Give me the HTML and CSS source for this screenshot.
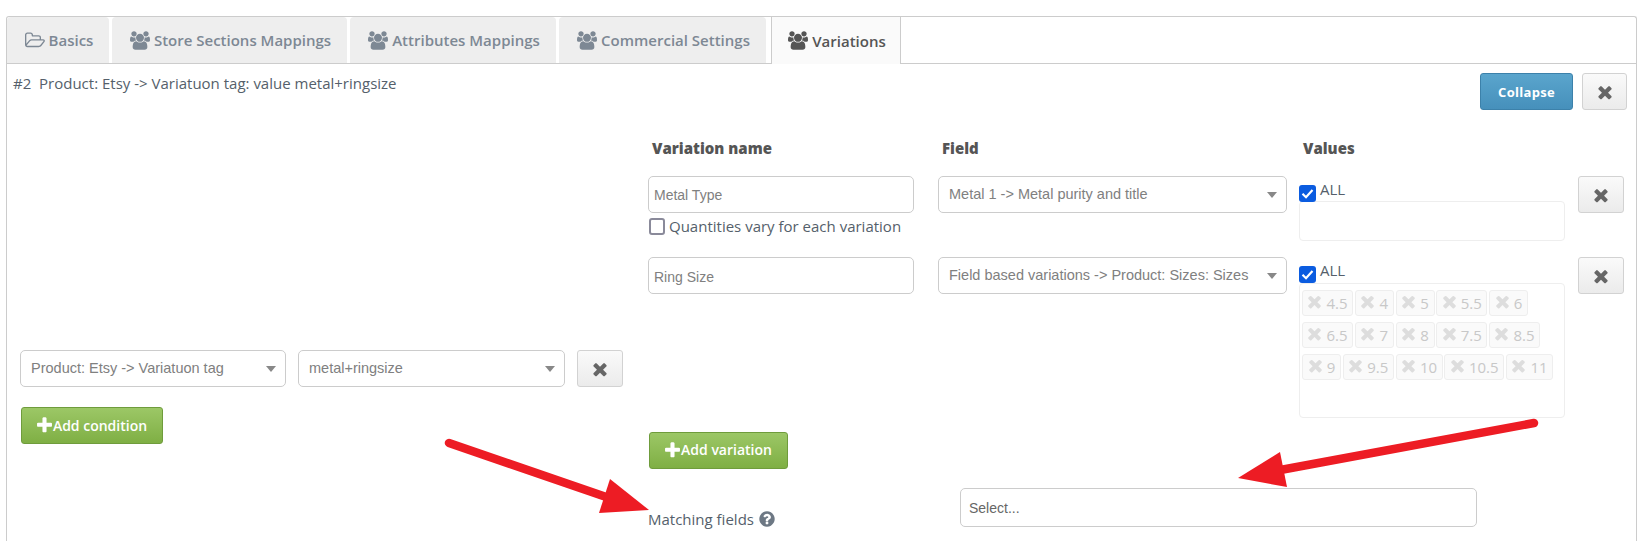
FILE: index.html
```html
<!DOCTYPE html>
<html lang="en">
<head>
<meta charset="utf-8">
<title>Variations</title>
<link rel="stylesheet" href="styles.css">
</head>
<body>
<svg class="defs" width="0" height="0" aria-hidden="true">
  <symbol id="i-users" viewBox="0 0 1920 1792"><path d="M593 896q-162 5-265 128h-134q-82 0-138-40.500t-56-118.500q0-353 124-353 6 0 43.500 21t97.500 42.500 119 21.500q67 0 133-23-5 37-5 66 0 139 81 256zm1071 637q0 120-73 189.500t-194 69.500h-874q-121 0-194-69.500t-73-189.500q0-53 3.500-103.500t14-109 26.500-108.500 43-97.500 62-81 85.500-53.500 111.500-20q10 0 43 21.500t73 48 107 48 135 21.500 135-21.500 107-48 73-48 43-21.500q61 0 111.500 20t85.500 53.500 62 81 43 97.500 26.500 108.500 14 109 3.500 103.500zm-1024-1277q0 106-75 181t-181 75-181-75-75-181 75-181 181-75 181 75 75 181zm704 384q0 159-112.500 271.500t-271.500 112.500-271.500-112.500-112.500-271.500 112.500-271.500 271.500-112.500 271.500 112.500 112.500 271.500zm576 225q0 78-56 118.500t-138 40.500h-134q-103-123-265-128 81-117 81-256 0-29-5-66 66 23 133 23 59 0 119-21.500t97.500-42.500 43.500-21q124 0 124 353zm-128-609q0 106-75 181t-181 75-181-75-75-181 75-181 181-75 181 75 75 181z"/></symbol>
  <symbol id="i-folder" viewBox="0 0 1920 1792"><path d="M1781 931q0-35-53-35h-1088q-40 0-85.500 21.500t-71.500 52.500l-294 363q-18 24-18 40 0 35 53 35h1088q40 0 86-22t71-53l294-363q18-22 18-39zm-1141-163h768v-160q0-40-28-68t-68-28h-576q-40 0-68-28t-28-68v-64q0-40-28-68t-68-28h-320q-40 0-68 28t-28 68v853l256-315q44-53 116-87.500t140-34.500zm1269 163q0 62-46 120l-295 363q-43 53-116 87.500t-140 34.500h-1088q-92 0-158-66t-66-158v-960q0-92 66-158t158-66h320q92 0 158 66t66 158v32h544q92 0 158 66t66 158v160h192q54 0 99 24.500t67 70.500q15 32 15 68z"/></symbol>
  <symbol id="i-times" viewBox="0 0 1408 1792"><path d="M1298 1322q0 40-28 68l-136 136q-28 28-68 28t-68-28l-294-294-294 294q-28 28-68 28t-68-28l-136-136q-28-28-28-68t28-68l294-294-294-294q-28-28-28-68t28-68l136-136q28-28 68-28t68 28l294 294 294-294q28-28 68-28t68 28l136 136q28 28 28 68t-28 68l-294 294 294 294q28 28 28 68z"/></symbol>
  <symbol id="i-plus" viewBox="0 0 1408 1792"><path d="M1408 736v192q0 40-28 68t-68 28h-416v416q0 40-28 68t-68 28h-192q-40 0-68-28t-28-68v-416h-416q-40 0-68-28t-28-68v-192q0-40 28-68t68-28h416v-416q0-40 28-68t68-28h192q40 0 68 28t28 68v416h416q40 0 68 28t28 68z"/></symbol>
  <symbol id="i-help" viewBox="0 0 1536 1792"><path d="M896 1376v-192q0-14-9-23t-23-9h-192q-14 0-23 9t-9 23v192q0 14 9 23t23 9h192q14 0 23-9t9-23zm256-672q0-88-55.500-163t-138.500-116-170-41q-243 0-371 213-15 24 8 42l132 100q7 6 19 6 16 0 25-12 53-68 86-92 34-24 86-24 48 0 85.500 26t37.500 59q0 38-20 61t-68 45q-63 28-115.500 86.500t-52.500 125.500v36q0 14 9 23t23 9h192q14 0 23-9t9-23q0-19 21.500-49.500t54.500-49.500q32-18 49-28.500t46-35 44.500-48 28-60.500 12.500-81zm384 192q0 209-103 385.500t-279.500 279.500-385.500 103-385.500-103-279.500-279.500-103-385.500 103-385.500 279.500-279.500 385.500-103 385.500 103 279.500 279.500 103 385.500z"/></symbol>
  <symbol id="i-check" viewBox="0 0 17 17"><path d="M3.500 8.800 7 12.200 13.500 5" fill="none" stroke="#fff" stroke-width="2.200"/></symbol>
</svg>

<div class="panel">
  <nav class="tabs">
    <a class="tab tab-basics"><svg class="tab-icon"><use href="#i-folder"/></svg>Basics</a>
    <a class="tab tab-store"><svg class="tab-icon"><use href="#i-users"/></svg>Store Sections Mappings</a>
    <a class="tab tab-attrs"><svg class="tab-icon"><use href="#i-users"/></svg>Attributes Mappings</a>
    <a class="tab tab-commercial"><svg class="tab-icon"><use href="#i-users"/></svg>Commercial Settings</a>
    <a class="tab tab-active"><svg class="tab-icon"><use href="#i-users"/></svg>Variations</a>
  </nav>

  <header class="rule-head">
    <div class="rule-title">#2&nbsp; Product: Etsy -&gt; Variatuon tag: value metal+ringsize</div>
    <div class="rule-actions">
      <button class="btn btn-blue">Collapse</button>
      <button class="btn btn-x btn-x-top"><svg class="x-icon"><use href="#i-times"/></svg></button>
    </div>
  </header>

  <div class="rule-body">
    <section class="conditions">
      <div class="condition-row">
        <div class="select select-cond">Product: Etsy -&gt; Variatuon tag<i class="caret"></i></div>
        <div class="select select-cond-wide">metal+ringsize<i class="caret"></i></div>
        <button class="btn btn-x"><svg class="x-icon"><use href="#i-times"/></svg></button>
      </div>
      <button class="btn btn-green btn-add-cond"><svg class="plus-icon"><use href="#i-plus"/></svg>Add condition</button>
    </section>

    <section class="variations">
      <div class="var-grid var-head">
        <div class="col-title">Variation name</div>
        <div class="col-title">Field</div>
        <div class="col-title">Values</div>
      </div>

      <div class="var-grid var-row var-row-first">
        <div>
          <input class="text-input" placeholder="Metal Type">
          <label class="qty"><span class="cb"></span>Quantities vary for each variation</label>
        </div>
        <div class="select select-field">Metal 1 -&gt; Metal purity and title<i class="caret"></i></div>
        <div class="values">
          <div class="all"><span class="cb cb-on"><svg class="cb-check"><use href="#i-check"/></svg></span><span class="all-text">ALL</span></div>
          <div class="value-box value-box-empty"></div>
        </div>
        <button class="btn btn-x"><svg class="x-icon"><use href="#i-times"/></svg></button>
      </div>

      <div class="var-grid var-row">
        <div><input class="text-input text-input-low" placeholder="Ring Size"></div>
        <div class="select select-field">Field based variations -&gt; Product: Sizes: Sizes<i class="caret"></i></div>
        <div class="values">
          <div class="all"><span class="cb cb-on"><svg class="cb-check"><use href="#i-check"/></svg></span><span class="all-text">ALL</span></div>
          <div class="value-box value-box-tags">
            <span class="tag tag-w"><svg class="tag-x"><use href="#i-times"/></svg>4.5</span>
            <span class="tag tag-n"><svg class="tag-x"><use href="#i-times"/></svg>4</span>
            <span class="tag tag-n"><svg class="tag-x"><use href="#i-times"/></svg>5</span>
            <span class="tag tag-w"><svg class="tag-x"><use href="#i-times"/></svg>5.5</span>
            <span class="tag tag-n"><svg class="tag-x"><use href="#i-times"/></svg>6</span>
            <span class="tag tag-w"><svg class="tag-x"><use href="#i-times"/></svg>6.5</span>
            <span class="tag tag-n"><svg class="tag-x"><use href="#i-times"/></svg>7</span>
            <span class="tag tag-n"><svg class="tag-x"><use href="#i-times"/></svg>8</span>
            <span class="tag tag-w"><svg class="tag-x"><use href="#i-times"/></svg>7.5</span>
            <span class="tag tag-w"><svg class="tag-x"><use href="#i-times"/></svg>8.5</span>
            <span class="tag tag-n"><svg class="tag-x"><use href="#i-times"/></svg>9</span>
            <span class="tag tag-w"><svg class="tag-x"><use href="#i-times"/></svg>9.5</span>
            <span class="tag tag-m"><svg class="tag-x"><use href="#i-times"/></svg>10</span>
            <span class="tag tag-l"><svg class="tag-x"><use href="#i-times"/></svg>10.5</span>
            <span class="tag tag-m"><svg class="tag-x"><use href="#i-times"/></svg>11</span>
          </div>
        </div>
        <button class="btn btn-x"><svg class="x-icon"><use href="#i-times"/></svg></button>
      </div>

      <button class="btn btn-green btn-add-var"><svg class="plus-icon"><use href="#i-plus"/></svg>Add variation</button>

      <div class="matching">
        <div class="matching-label">Matching fields <svg class="help-icon"><use href="#i-help"/></svg></div>
        <input class="text-input matching-input" placeholder="Select...">
      </div>
    </section>
  </div>
</div>

<svg class="annotations" viewBox="0 0 1643 541" aria-hidden="true">
  <path class="arrow-shaft" d="M449 443 612 499"/>
  <polygon class="arrow-head" points="610,479 649,510 599,513"/>
  <path class="arrow-shaft" d="M1534 423 1275 471"/>
  <polygon class="arrow-head" points="1280,452 1238,478 1287,487"/>
</svg>
</body>
</html>
```
FILE: styles.css
```css
* { box-sizing: border-box; }
html, body { height: 541px; }
body {
  margin: 0;
  padding: 16px 0 0 6px;
  overflow: hidden;
  background: #fff;
  color: #555f6b;
  font: 15px/20px "Open Sans", sans-serif;
}
.defs { position: absolute; }
svg { fill: currentColor; }

.panel {
  width: 1631px;
  height: 525px;
  border: 1px solid #ccc;
  border-bottom: 0;
  border-radius: 3px 3px 0 0;
}

/* tabs */
.tabs {
  display: flex;
  height: 47px;
  border-bottom: 1px solid #ccc;
}
.tab {
  display: flex;
  align-items: center;
  justify-content: center;
  height: 47px;
  margin-right: 3px;
  padding-left: 2px;
  border-bottom: 1px solid #ccc;
  border-radius: 4px 4px 0 0;
  background: #eee;
  color: #7d8894;
  font-weight: 600;
  font-size: 15px;
}
.tab-icon { width: 20px; height: 19px; margin-right: 4px; }
.tab-basics { width: 102px; }
.tab-store { width: 235px; }
.tab-attrs { width: 206px; }
.tab-commercial { width: 207px; margin-right: 5px; }
.tab-active {
  width: 130px;
  margin: 0;
  background: #fafafa;
  color: #555;
  border: solid #ccc;
  border-width: 0 1px;
  border-radius: 0;
}

/* header */
.rule-head {
  display: flex;
  justify-content: space-between;
  height: 68px;
  padding: 9px 9px 0 6px;
}
.rule-actions { display: flex; gap: 9px; align-items: flex-start; }

/* buttons */
.btn {
  display: inline-flex;
  align-items: center;
  justify-content: center;
  height: 37px;
  padding: 0;
  border: 1px solid #d2d2d2;
  border-radius: 3px;
  font: 600 14px/20px "Open Sans", sans-serif;
}
.btn-blue {
  width: 93px;
  color: #fff;
  background: linear-gradient(#5aa5cd, #4690bb);
  border-color: #3c81aa;
  font-size: 13px;
  letter-spacing: .3px;
  font-weight: 700;
}
.btn-x {
  width: 46px;
  color: #666;
  background: linear-gradient(#fafafa, #ebebeb);
}
.btn-x-top { width: 45px; }
.x-icon { width: 16px; height: 20px; }
.btn-green {
  color: #fff;
  background: linear-gradient(#9cc766, #7faf44);
  border-color: #6f9c3c;
}
.plus-icon { width: 15px; height: 19px; margin-right: 1px; }

/* body */
.rule-body { display: flex; }
.conditions { width: 641px; padding: 218px 0 0 13px; }
.condition-row { display: flex; gap: 12px; }
.btn-add-cond { width: 142px; margin: 20px 0 0 1px; }

.select,
.select-cond-wide {
  position: relative;
  height: 37px;
  padding: 0 30px 0 10px;
  border: 1px solid #ccc;
  border-radius: 5px;
  background: #fff;
  color: #808080;
  font: 14.500px/35px "Liberation Sans", Arial, sans-serif;
  white-space: nowrap;
}
.select-cond { width: 266px; }
.select-cond-wide { width: 267px; }
.select-field { width: 349px; }
.caret {
  position: absolute;
  right: 9px;
  top: 15px;
  border: 5px solid transparent;
  border-top: 6px solid #888;
  border-bottom: 0;
}

.variations { width: 985px; padding-top: 6px; }
.var-grid {
  display: grid;
  grid-template-columns: 290px 361px 279px 46px;
}
.var-head { margin-bottom: 18px; }
.col-title { padding-left: 4px; font-weight: 800; color: #555; }
.var-row { margin-bottom: 13.600px; align-items: start; }
.var-row-first { margin-bottom: 16.400px; }

.text-input {
  display: block;
  width: 266px;
  height: 37px;
  padding: 0 5px;
  border: 1px solid #ccc;
  border-radius: 5px;
  background: #fff;
  font: 14px "Liberation Sans", Arial, sans-serif;
  color: #555;
}
.text-input-low { padding-top: 2px; }
.text-input::placeholder { color: #808080; opacity: 1; }
.qty {
  display: flex;
  align-items: center;
  gap: 4px;
  margin: 3px 0 0 1px;
  white-space: nowrap;
}
.cb {
  flex: none;
  display: block;
  width: 16px;
  height: 17px;
  border: 2px solid #8a8a9a;
  border-radius: 3px;
  background: #fff;
}
.cb-on {
  width: 17px;
  border: 0;
  background: #0b5ce0;
}
.cb-check { display: block; width: 17px; height: 17px; }

.values { padding-top: 9px; width: 266px; }
.all { display: flex; height: 16px; }
.all-text { margin: -6px 0 0 4px; }
.value-box {
  border: 1px solid #eee;
  border-radius: 4px;
  background: #fff;
}
.value-box-empty { height: 40px; }
.value-box-tags {
  display: flex;
  flex-wrap: wrap;
  align-content: flex-start;
  gap: 6px 1.750px;
  height: 135px;
  margin-top: 1px;
  padding: 6px 2px;
}
.tag {
  display: flex;
  align-items: center;
  justify-content: center;
  height: 26px;
  border: 1px solid #eee;
  border-radius: 3px;
  background: #fafafa;
  color: #c8c8c8;
  font-size: 15px;
}
.tag-n { width: 39px; }
.tag-w { width: 51px; }
.tag-m { width: 47px; }
.tag-l { width: 60px; }
.tag-x { width: 15px; height: 19px; margin: -3px 4px 0 0; color: #ddd; }

.btn-add-var { width: 139px; margin-left: 1px; }
.matching { display: flex; margin-top: 19px; }
.matching-label { width: 312px; padding-top: 21px; white-space: nowrap; }
.help-icon { width: 16px; height: 18px; vertical-align: -3px; color: #6d7884; margin-left: 1px; }
.matching-input { width: 517px; height: 39px; padding: 1px 8px 0; }
.matching-input::placeholder { color: #666; }

/* red arrows drawn over the screenshot */
.annotations {
  position: absolute;
  left: 0;
  top: 0;
  width: 1643px;
  height: 541px;
  pointer-events: none;
}
.arrow-shaft { fill: none; stroke: #ed1c24; stroke-width: 8.500; stroke-linecap: round; }
.arrow-head { fill: #ed1c24; }
```
